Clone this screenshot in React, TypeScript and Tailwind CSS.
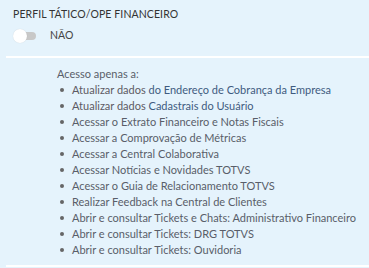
import React from 'react';

interface AccessItem {
  lead?: string;
  rest: string;
}

const items: AccessItem[] = [
  { lead: 'Atualizar dados', rest: ' do Endereço de Cobrança da Empresa' },
  { lead: 'Atualizar dados', rest: ' Cadastrais do Usuário' },
  { rest: 'Acessar o Extrato Financeiro e Notas Fiscais' },
  { rest: 'Acessar a Comprovação de Métricas' },
  { rest: 'Acessar a Central Colaborativa' },
  { rest: 'Acessar Notícias e Novidades TOTVS' },
  { rest: 'Acessar o Guia de Relacionamento TOTVS' },
  { rest: 'Realizar Feedback na Central de Clientes' },
  { rest: 'Abrir e consultar Tickets e Chats: Administrativo Financeiro' },
  { rest: 'Abrir e consultar Tickets: DRG TOTVS' },
  { rest: 'Abrir e consultar Tickets: Ouvidoria' },
];

const App: React.FC = () => {
  return (
    <div
      className="w-[369px] h-[268px] bg-[#e5f3fc] overflow-hidden"
      style={{ fontFamily: 'Lato, "Noto Sans", sans-serif' }}
    >
      <div className="px-[13px] pt-[7px] h-[56px]">
        <div className="text-[10.5px] leading-[14px] text-[#333] whitespace-nowrap tracking-[0.1px]">PERFIL TÁTICO/OPE FINANCEIRO</div>
        <div className="flex items-center mt-[7px]">
          <div className="relative w-[23px] h-[14px]">
            <div className="absolute left-[4px] top-[3px] w-[19px] h-[8px] rounded-full bg-[#c8c8c8]" />
            <div className="absolute left-0 top-0 w-[14px] h-[14px] rounded-full bg-white shadow-[0_0_1px_rgba(0,0,0,0.15)]" />
          </div>
          <span className="ml-[14px] text-[10.5px] text-[#444]">NÃO</span>
        </div>
      </div>
      <div className="ml-[6px] h-[2px] bg-white" />
      <div className="pl-[57px] pt-[8px] h-[207px] text-[11px] leading-[16px] text-[#595e69] whitespace-nowrap">
        <div>Acesso apenas a:</div>
        <ul>
          {items.map((item, i) => (
            <li key={i} className="flex items-center">
              <span className="w-[15px] shrink-0 pl-[3px] flex">
                <span className="w-[4px] h-[4px] rounded-full bg-[#666]" />
              </span>
              <span>
                {item.lead && <span className="text-[#5d5a63]">{item.lead}</span>}
                <span className={item.lead ? 'text-[#3f5b80]' : ''}>{item.rest}</span>
              </span>
            </li>
          ))}
        </ul>
      </div>
      <div className="ml-[6px] h-[2px] bg-white" />
    </div>
  );
};

export default App;
